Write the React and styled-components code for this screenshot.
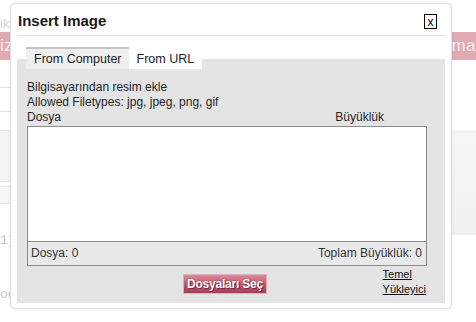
import styled, { createGlobalStyle } from 'styled-components';

const GlobalStyle = createGlobalStyle`
  html, body {
    margin: 0;
    padding: 0;
    background: #ffffff;
    overflow: hidden;
  }
  body {
    font-family: "Liberation Sans", Arial, sans-serif;
  }
`;

// faded page behind the modal
const Page = styled.div`
  position: relative;
  width: 476px;
  height: 322px;
  overflow: hidden;
  background: #fff;
`;

const TopText = styled.div`
  height: 32px;
  display: flex;
  align-items: flex-end;
  font-size: 13px;
  color: #d5d5d5;
  line-height: 16px;
`;

const PinkBar = styled.div`
  height: 28px;
  background: #dfaab3;
  display: flex;
  justify-content: space-between;
  align-items: center;
  font-size: 17px;
  color: #fbeef0;
  letter-spacing: 0.5px;
`;

const PageBody = styled.div`
  display: flex;
  justify-content: space-between;
`;

const SideColumn = styled.div`
  width: 40px;
  display: flex;
  flex-direction: column;
`;

const SideLine = styled.div`
  height: ${p => p.$h}px;
  border-bottom: 1px solid #e4e4e4;
`;

const SideBlock = styled.div`
  height: ${p => p.$h}px;
  margin-top: ${p => p.$mt || 0}px;
  background: ${p => p.$bg || 'transparent'};
  border-top: 1px solid #e6e6e6;
  border-bottom: ${p => (p.$bb ? '1px solid #e6e6e6' : 'none')};
`;

const SideText = styled.div`
  margin-top: ${p => p.$mt}px;
  font-family: "Liberation Mono", monospace;
  font-size: 13px;
  color: #c8c8c8;
  line-height: 14px;
`;

const RightBlock = styled.div`
  margin-top: 71px;
  height: 103px;
  border-top: 1px solid #ececec;
  background: linear-gradient(#f6f6f6, #f0f0f0);
`;

// dialog
const Dialog = styled.div`
  position: absolute;
  left: 10px;
  top: 3px;
  width: 442px;
  height: 306px;
  box-sizing: border-box;
  background: #fff;
  border: 1px solid #dcdcdc;
  border-radius: 5px;
  box-shadow: 0 0 3px rgba(0, 0, 0, 0.08);
  padding: 0 6px 5px 6px;
  display: flex;
  flex-direction: column;
`;

const TitleBar = styled.div`
  height: 31px;
  display: flex;
  align-items: center;
  justify-content: space-between;
  border-bottom: 1px solid #dedede;
  padding: 0 8px 0 1px;
`;

const Title = styled.div`
  font-weight: bold;
  font-size: 15px;
  color: #1a1a1a;
  margin-top: 1px;
`;

const CloseBox = styled.div`
  width: 11px;
  height: 13px;
  border: 1px solid #000;
  display: flex;
  align-items: center;
  justify-content: center;
  font-size: 12px;
  line-height: 12px;
  color: #000;
  margin-top: 4px;
`;

const TabArea = styled.div`
  flex: 1;
  display: flex;
  flex-direction: column;
  padding-top: 11px;
  background: linear-gradient(#fff 23px, #e4e4e4 23px);
`;

const TabRow = styled.div`
  display: flex;
  padding-left: 9px;
`;

const Tab = styled.div`
  height: 22px;
  box-sizing: border-box;
  padding: 0 ${p => (p.$active ? 7 : 8)}px 0 8px;
  display: flex;
  align-items: center;
  white-space: nowrap;
  font-size: 12.5px;
  color: #222;
  background: ${p => (p.$active ? '#efefef' : '#fff')};
  border-top: 2px solid ${p => (p.$active ? '#c4c4c4' : 'transparent')};
`;

const Panel = styled.div`
  flex: 1;
  display: flex;
  flex-direction: column;
  padding: 11px 18px 0 10px;
  font-size: 12px;
  line-height: 15px;
  color: #262626;
`;

const HeaderRow = styled.div`
  display: flex;
  justify-content: space-between;
  padding-right: 43px;
  margin-bottom: 1px;
`;

const FileBox = styled.div`
  height: 140px;
  box-sizing: border-box;
  border: 1px solid #8c8c8c;
  display: flex;
  flex-direction: column;
`;

const FileList = styled.div`
  flex: 1;
  background: #fff;
`;

const FileFooter = styled.div`
  height: 24px;
  box-sizing: border-box;
  border-top: 1px solid #8c8c8c;
  background: #e9e9e9;
  display: flex;
  align-items: center;
  justify-content: space-between;
  padding: 0 4px 0 3px;
  color: #333;
`;

const ActionRow = styled.div`
  display: grid;
  grid-template-columns: 1fr auto 1fr;
  align-items: start;
  padding-top: 1px;
`;

const SelectButton = styled.button`
  grid-column: 2;
  margin-top: 7px;
  margin-right: 4px;
  height: 20px;
  padding: 0 3px;
  border: 1px solid #dcb3bb;
  background: linear-gradient(#d98c9b, #b9566c 55%, #a4405a);
  color: #fff;
  font-family: "Liberation Sans", Arial, sans-serif;
  font-weight: bold;
  font-size: 12px;
  letter-spacing: -0.2px;
  text-shadow: 0 0 1px #7a2034, 1px 1px 0 #8a2a40;
  cursor: pointer;
`;

const Links = styled.div`
  grid-column: 3;
  justify-self: end;
  margin-right: 1px;
  display: flex;
  flex-direction: column;
  font-size: 11px;
  line-height: 15px;
`;

const Link = styled.a`
  color: #111;
  text-decoration: underline;
`;

export default function App() {
  return (
    <>
      <GlobalStyle />
      <Page>
        <TopText>ik</TopText>
        <PinkBar>
          <span>iz</span>
          <span>tma</span>
        </PinkBar>
        <PageBody>
          <SideColumn>
            <SideLine $h={27} />
            <SideLine $h={23} />
            <SideBlock $h={50} $mt={18} $bg="#f3f3f3" $bb />
            <SideBlock $h={16} $mt={4} $bg="#f7f7f7" $bb />
            <SideText $mt={30}>1]</SideText>
            <SideText $mt={40}>oo</SideText>
          </SideColumn>
          <SideColumn>
            <RightBlock />
          </SideColumn>
        </PageBody>

        <Dialog>
          <TitleBar>
            <Title>Insert Image</Title>
            <CloseBox>x</CloseBox>
          </TitleBar>
          <TabArea>
            <TabRow>
              <Tab $active>From Computer</Tab>
              <Tab>From URL</Tab>
            </TabRow>
            <Panel>
              <div>Bilgisayarından resim ekle</div>
              <div>Allowed Filetypes: jpg, jpeg, png, gif</div>
              <HeaderRow>
                <span>Dosya</span>
                <span>Büyüklük</span>
              </HeaderRow>
              <FileBox>
                <FileList />
                <FileFooter>
                  <span>Dosya: 0</span>
                  <span>Toplam Büyüklük: 0</span>
                </FileFooter>
              </FileBox>
              <ActionRow>
                <SelectButton>Dosyaları Seç</SelectButton>
                <Links>
                  <Link href="#">Temel</Link>
                  <Link href="#">Yükleyici</Link>
                </Links>
              </ActionRow>
            </Panel>
          </TabArea>
        </Dialog>
      </Page>
    </>
  );
}
